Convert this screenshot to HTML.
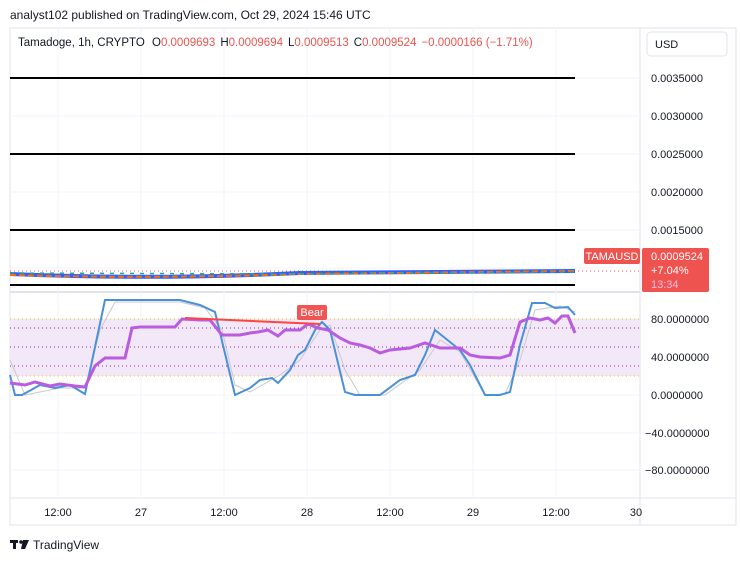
<!DOCTYPE html>
<html><head><meta charset="utf-8"><style>
body{margin:0;width:740px;height:562px;background:#fff;font-family:"Liberation Sans",sans-serif;overflow:hidden;position:relative}
.t{position:absolute;white-space:nowrap}
</style></head><body>
<div class="t" style="left:10px;top:8px;font-size:12px;color:#131722">analyst102 published on TradingView.com, Oct 29, 2024 15:46 UTC</div>
<svg width="740" height="562" style="position:absolute;left:0;top:0" font-family="Liberation Sans, sans-serif">
<rect x="10" y="28" width="726" height="497" fill="none" stroke="#e0e3eb"/>
<line x1="640" y1="28" x2="640" y2="525" stroke="#e0e3eb"/>
<line x1="10" y1="292" x2="640" y2="292" stroke="#e0e3eb" stroke-width="2"/>
<line x1="10" y1="498" x2="736" y2="498" stroke="#e0e3eb"/>
<g stroke="#f0f3fa">
<line x1="58" y1="28" x2="58" y2="498"/><line x1="141" y1="28" x2="141" y2="498"/><line x1="224" y1="28" x2="224" y2="498"/><line x1="307" y1="28" x2="307" y2="498"/><line x1="390" y1="28" x2="390" y2="498"/><line x1="473" y1="28" x2="473" y2="498"/><line x1="556" y1="28" x2="556" y2="498"/>
<line x1="10" y1="78" x2="640" y2="78"/><line x1="10" y1="116" x2="640" y2="116"/><line x1="10" y1="154" x2="640" y2="154"/><line x1="10" y1="192" x2="640" y2="192"/><line x1="10" y1="230" x2="640" y2="230"/><line x1="10" y1="268" x2="640" y2="268"/>
<line x1="10" y1="319" x2="640" y2="319"/><line x1="10" y1="357" x2="640" y2="357"/><line x1="10" y1="395" x2="640" y2="395"/><line x1="10" y1="433" x2="640" y2="433"/><line x1="10" y1="470" x2="640" y2="470"/>
</g>
<g stroke="#000" stroke-width="2"><line x1="10" y1="78" x2="575" y2="78"/><line x1="10" y1="154" x2="575" y2="154"/><line x1="10" y1="230" x2="575" y2="230"/><line x1="10" y1="285" x2="575" y2="285"/></g>
<line x1="10" y1="271" x2="640" y2="271" stroke="#ef5350" stroke-dasharray="1,3"/>
<path d="M10 274 Q150 280 300 273 L575 271" stroke="#2962ff" stroke-width="4" fill="none"/>
<path d="M10 275 Q150 279 300 274 L575 271" stroke="#ff6d00" stroke-width="2" fill="none" stroke-dasharray="6,3"/>
<path d="M10 273 L300 274 L575 272" stroke="#26a69a" stroke-width="1.5" fill="none" stroke-dasharray="4,6"/>
<rect x="10" y="319" width="630" height="57" fill="#f3e8f7"/>
<g stroke-dasharray="1,3" stroke-width="1"><line x1="10" y1="319" x2="640" y2="319" stroke="#f5c518"/><line x1="10" y1="376" x2="640" y2="376" stroke="#f5c518"/>
<line x1="10" y1="328" x2="640" y2="328" stroke="#8e2c9a"/><line x1="10" y1="347" x2="640" y2="347" stroke="#8e2c9a"/><line x1="10" y1="366" x2="640" y2="366" stroke="#8e2c9a"/></g>
<polyline fill="none" stroke="#c8c8d0" stroke-width="1" points="10,360 25,395 40,392 60,388 85,388 100,330 115,302 180,302 205,308 222,330 235,385 250,392 280,375 300,360 320,330 330,325 345,370 360,395 385,395 420,370 440,340 460,352 485,395 505,394 520,360 535,310 560,306 575,312"/>
<polyline fill="none" stroke="#4a90d9" stroke-width="2" points="10,375 15,395 22,395 40,385 55,388 70,385 85,394 105,300 120,300 180,300 200,305 215,312 235,395 250,388 260,380 272,378 278,383 290,370 298,355 305,350 315,330 322,322 330,330 345,392 355,395 380,395 400,380 415,375 425,355 435,330 445,338 460,350 470,365 485,395 500,395 510,392 520,345 532,303 545,303 555,308 568,307 575,315"/>
<polyline fill="none" stroke="#b95ce0" stroke-width="3" points="10,383 25,385 35,382 50,386 60,384 75,386 85,387 95,366 105,358 125,358 132,328 140,327 175,327 182,319 200,320 210,320 222,335 240,335 250,333 258,332 268,330 278,336 285,330 300,330 308,324 318,328 328,330 340,338 350,343 360,345 370,348 380,353 390,350 410,348 425,343 440,348 460,348 470,355 480,357 500,358 510,355 520,322 530,318 540,320 548,318 555,323 562,316 568,316 575,333"/>
<line x1="185" y1="318" x2="320" y2="324" stroke="#f44" stroke-width="2"/>
<rect x="297" y="305" width="30" height="15" rx="2" fill="#f05454"/>
<text x="312" y="316" font-size="11" fill="#fff" text-anchor="middle">Bear</text>
<rect x="584" y="248" width="56" height="16" rx="2" fill="#ef5350"/>
<text x="612" y="260" font-size="11" fill="#fff" text-anchor="middle">TAMAUSD</text>
<rect x="642" y="248" width="67" height="44" rx="2" fill="#ef5350"/>
<text x="651" y="260" font-size="11" fill="#fff">0.0009524</text>
<text x="651" y="274" font-size="11" fill="#fff">+7.04%</text>
<text x="651" y="288" font-size="11" fill="#fbd">13:34</text>
<rect x="647" y="32" width="80" height="24" rx="4" fill="#fff" stroke="#e0e3eb"/>
<text x="655" y="48" font-size="11" fill="#131722">USD</text>
<g font-size="11" fill="#131722">
<text x="651" y="82">0.0035000</text><text x="651" y="120">0.0030000</text><text x="651" y="158">0.0025000</text><text x="651" y="196">0.0020000</text><text x="651" y="234">0.0015000</text>
<text x="651" y="323">80.0000000</text><text x="651" y="361">40.0000000</text><text x="651" y="399">0.0000000</text><text x="645" y="437">−40.0000000</text><text x="645" y="474">−80.0000000</text>
<g text-anchor="middle"><text x="58" y="516">12:00</text><text x="141" y="516">27</text><text x="224" y="516">12:00</text><text x="307" y="516">28</text><text x="390" y="516">12:00</text><text x="473" y="516">29</text><text x="556" y="516">12:00</text><text x="636" y="516">30</text></g>
</g>
<text x="18" y="46" font-size="11.5" fill="#131722">Tamadoge, 1h, CRYPTO <tspan dx="4">O</tspan><tspan fill="#ef5350">0.0009693</tspan><tspan dx="5">H</tspan><tspan fill="#ef5350">0.0009694</tspan><tspan dx="5">L</tspan><tspan fill="#ef5350">0.0009513</tspan><tspan dx="5">C</tspan><tspan fill="#ef5350">0.0009524</tspan><tspan dx="5" fill="#ef5350">−0.0000166 (−1.71%)</tspan></text>
<g fill="#131722"><rect x="10" y="540" width="8" height="3"/><rect x="13" y="540" width="3" height="9"/><circle cx="21" cy="542" r="1.8"/><path d="M23 540 H29 L25 549 H21 Z"/></g>
<text x="33" y="549" font-size="12" fill="#131722">TradingView</text>
</svg>
</body></html>
